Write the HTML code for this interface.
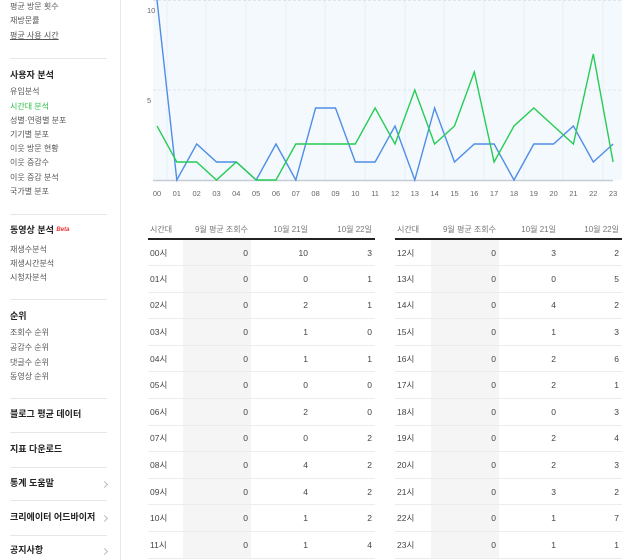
<!DOCTYPE html>
<html><head><meta charset="utf-8"><style>
*{margin:0;padding:0;box-sizing:border-box}
body{width:640px;height:560px;overflow:hidden;background:#fff;font-family:"Liberation Sans","Noto Sans CJK KR",sans-serif;color:#333;position:relative}
.s{position:absolute;left:10px;font-size:8px;color:#555;white-space:nowrap;line-height:10px}
.h{position:absolute;left:10px;font-size:9px;font-weight:bold;color:#222;white-space:nowrap;line-height:11px}
.sep{position:absolute;left:10px;width:97px;height:1px;background:#e6e6e6}
.chev{position:absolute;left:102px;width:5px;height:5px;border-top:1px solid #bbb;border-right:1px solid #bbb;transform:rotate(45deg)}
.vl{position:absolute;left:120px;top:0;width:1px;height:560px;background:#e8e8e8}
table{position:absolute;top:221px;border-collapse:collapse;font-size:8.5px;color:#444}
td,th{height:26.6px;padding:0 3px;text-align:right;border-bottom:1px solid #ececec;white-space:nowrap}
th{height:18px;font-weight:normal;color:#777;font-size:8px;border-bottom:2px solid #222;vertical-align:middle}
td:first-child,th:first-child{text-align:left;padding-left:2px}
td:nth-child(2){background:#f5f5f5}
</style></head><body>
<div class="s" style="top:2px">평균 방문 횟수</div>
<div class="s" style="top:16px">재방문률</div>
<div class="s" style="top:31px;text-decoration:underline">평균 사용 시간</div>
<div class="sep" style="top:58px"></div>
<div class="h" style="top:70px">사용자 분석</div>
<div class="s" style="top:87px">유입분석</div>
<div class="s" style="top:102px;color:#2fc24a">시간대 분석</div>
<div class="s" style="top:116px">성별·연령별 분포</div>
<div class="s" style="top:130px">기기별 분포</div>
<div class="s" style="top:144px">이웃 방문 현황</div>
<div class="s" style="top:158px">이웃 증감수</div>
<div class="s" style="top:173px">이웃 증감 분석</div>
<div class="s" style="top:187px">국가별 분포</div>
<div class="sep" style="top:214px"></div>
<div class="h" style="top:225px">동영상 분석 <span style="color:#e33;font-size:6px;font-style:italic;vertical-align:top">Beta</span></div>
<div class="s" style="top:245px">재생수분석</div>
<div class="s" style="top:259px">재생시간분석</div>
<div class="s" style="top:273px">시청자분석</div>
<div class="sep" style="top:299px"></div>
<div class="h" style="top:311px">순위</div>
<div class="s" style="top:328px">조회수 순위</div>
<div class="s" style="top:343px">공감수 순위</div>
<div class="s" style="top:358px">댓글수 순위</div>
<div class="s" style="top:372px">동영상 순위</div>
<div class="sep" style="top:398px"></div>
<div class="h" style="top:409px">블로그 평균 데이터</div>
<div class="sep" style="top:432px"></div>
<div class="h" style="top:444px">지표 다운로드</div>
<div class="sep" style="top:467px"></div>
<div class="h" style="top:478px">통계 도움말</div><div class="chev" style="top:482px"></div>
<div class="sep" style="top:500px"></div>
<div class="h" style="top:512px">크리에이터 어드바이저</div><div class="chev" style="top:516px"></div>
<div class="sep" style="top:535px"></div>
<div class="h" style="top:545px">공지사항</div><div class="chev" style="top:549px"></div>
<div class="vl"></div>

<svg style="position:absolute;left:0;top:0" width="640" height="200" viewBox="0 0 640 200">
<rect x="153" y="0" width="469" height="180" fill="#f4f9fd"/>
<g stroke="#e9f1f8" stroke-width="1">
<line x1="167" y1="0" x2="167" y2="180"/><line x1="206" y1="0" x2="206" y2="180"/><line x1="246" y1="0" x2="246" y2="180"/><line x1="286" y1="0" x2="286" y2="180"/><line x1="325" y1="0" x2="325" y2="180"/><line x1="365" y1="0" x2="365" y2="180"/><line x1="405" y1="0" x2="405" y2="180"/><line x1="444" y1="0" x2="444" y2="180"/><line x1="484" y1="0" x2="484" y2="180"/><line x1="524" y1="0" x2="524" y2="180"/><line x1="563" y1="0" x2="563" y2="180"/><line x1="603" y1="0" x2="603" y2="180"/>
</g>
<line x1="153" y1="90" x2="622" y2="90" stroke="#dde6ee" stroke-dasharray="3,2"/>
<line x1="153" y1="0.5" x2="622" y2="0.5" stroke="#dde6ee" stroke-dasharray="3,2"/>
<line x1="153" y1="180.5" x2="613" y2="180.5" stroke="#c5ccd3" stroke-width="1.5"/>
<g font-size="7.5" fill="#666" font-family="Liberation Sans,sans-serif">
<text x="147" y="13">10</text><text x="147" y="103">5</text>
</g>
<polyline fill="none" stroke="#4f8ee6" stroke-width="1.4" points="157,0 176.8,180 196.7,144 216.5,162 236.3,162 256.2,180 276,144 295.8,180 315.6,108 335.5,108 355.3,162 375.1,162 395,126 414.8,180 434.6,108 454.5,162 474.3,144 494.1,144 514,180 533.8,144 553.6,144 573.4,126 593.3,162 613.1,144"/>
<polyline fill="none" stroke="#27cc55" stroke-width="1.4" points="157,126 176.8,162 196.7,162 216.5,180 236.3,162 256.2,180 276,180 295.8,144 315.6,144 335.5,144 355.3,144 375.1,108 395,144 414.8,90 434.6,144 454.5,126 474.3,72 494.1,162 514,126 533.8,108 553.6,126 573.4,144 593.3,54 613.1,162"/>
<g font-size="7.5" fill="#666" text-anchor="middle" font-family="Liberation Sans,sans-serif">
<text x="157" y="196">00</text><text x="176.8" y="196">01</text><text x="196.7" y="196">02</text><text x="216.5" y="196">03</text><text x="236.3" y="196">04</text><text x="256.2" y="196">05</text><text x="276" y="196">06</text><text x="295.8" y="196">07</text><text x="315.6" y="196">08</text><text x="335.5" y="196">09</text><text x="355.3" y="196">10</text><text x="375.1" y="196">11</text><text x="395" y="196">12</text><text x="414.8" y="196">13</text><text x="434.6" y="196">14</text><text x="454.5" y="196">15</text><text x="474.3" y="196">16</text><text x="494.1" y="196">17</text><text x="514" y="196">18</text><text x="533.8" y="196">19</text><text x="553.6" y="196">20</text><text x="573.4" y="196">21</text><text x="593.3" y="196">22</text><text x="613.1" y="196">23</text>
</g>
</svg>

<table style="left:148px;width:227px">
<colgroup><col style="width:35px"><col style="width:68px"><col style="width:60px"><col style="width:64px"></colgroup>
<tr><th>시간대</th><th>9월 평균 조회수</th><th>10월 21일</th><th>10월 22일</th></tr>
<tr><td>00시</td><td>0</td><td>10</td><td>3</td></tr>
<tr><td>01시</td><td>0</td><td>0</td><td>1</td></tr>
<tr><td>02시</td><td>0</td><td>2</td><td>1</td></tr>
<tr><td>03시</td><td>0</td><td>1</td><td>0</td></tr>
<tr><td>04시</td><td>0</td><td>1</td><td>1</td></tr>
<tr><td>05시</td><td>0</td><td>0</td><td>0</td></tr>
<tr><td>06시</td><td>0</td><td>2</td><td>0</td></tr>
<tr><td>07시</td><td>0</td><td>0</td><td>2</td></tr>
<tr><td>08시</td><td>0</td><td>4</td><td>2</td></tr>
<tr><td>09시</td><td>0</td><td>4</td><td>2</td></tr>
<tr><td>10시</td><td>0</td><td>1</td><td>2</td></tr>
<tr><td>11시</td><td>0</td><td>1</td><td>4</td></tr>
</table>
<table style="left:395px;width:227px">
<colgroup><col style="width:36px"><col style="width:68px"><col style="width:60px"><col style="width:63px"></colgroup>
<tr><th>시간대</th><th>9월 평균 조회수</th><th>10월 21일</th><th>10월 22일</th></tr>
<tr><td>12시</td><td>0</td><td>3</td><td>2</td></tr>
<tr><td>13시</td><td>0</td><td>0</td><td>5</td></tr>
<tr><td>14시</td><td>0</td><td>4</td><td>2</td></tr>
<tr><td>15시</td><td>0</td><td>1</td><td>3</td></tr>
<tr><td>16시</td><td>0</td><td>2</td><td>6</td></tr>
<tr><td>17시</td><td>0</td><td>2</td><td>1</td></tr>
<tr><td>18시</td><td>0</td><td>0</td><td>3</td></tr>
<tr><td>19시</td><td>0</td><td>2</td><td>4</td></tr>
<tr><td>20시</td><td>0</td><td>2</td><td>3</td></tr>
<tr><td>21시</td><td>0</td><td>3</td><td>2</td></tr>
<tr><td>22시</td><td>0</td><td>1</td><td>7</td></tr>
<tr><td>23시</td><td>0</td><td>1</td><td>1</td></tr>
</table>
</body></html>
